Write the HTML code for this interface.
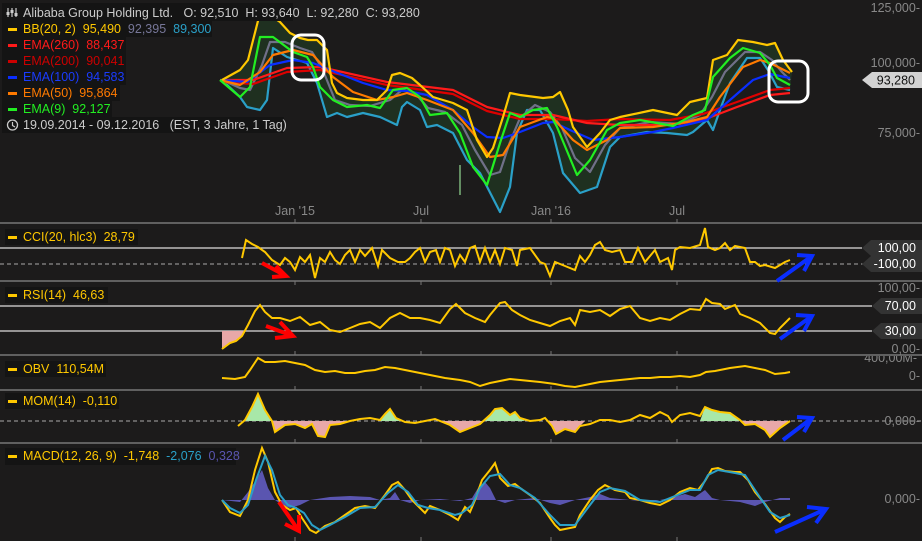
<!DOCTYPE html>
<html><head><meta charset="utf-8"><style>
html,body{margin:0;padding:0;background:#1c1b1b;width:922px;height:541px;overflow:hidden}
svg{display:block}
text{font-family:"Liberation Sans",sans-serif;font-size:12.5px;white-space:pre}
</style></head><body>
<svg width="922" height="541" viewBox="0 0 922 541" xmlns="http://www.w3.org/2000/svg" xml:space="preserve">
<rect width="922" height="541" fill="#1c1b1b"/>
<g stroke="#777" stroke-width="1.5">
<line x1="0" y1="223" x2="922" y2="223"/><line x1="0" y1="281" x2="922" y2="281"/>
<line x1="0" y1="355" x2="922" y2="355"/><line x1="0" y1="390" x2="922" y2="390"/>
<line x1="0" y1="443" x2="922" y2="443"/>
</g>
<g stroke="#777" stroke-width="1">
<line x1="295" y1="219" x2="295" y2="223"/><line x1="421" y1="219" x2="421" y2="223"/><line x1="551" y1="219" x2="551" y2="223"/><line x1="677" y1="219" x2="677" y2="223"/>
<line x1="295" y1="281" x2="295" y2="285"/><line x1="421" y1="281" x2="421" y2="285"/><line x1="551" y1="281" x2="551" y2="285"/><line x1="677" y1="281" x2="677" y2="285"/>
<line x1="295" y1="351" x2="295" y2="355"/><line x1="421" y1="351" x2="421" y2="355"/><line x1="551" y1="351" x2="551" y2="355"/><line x1="677" y1="351" x2="677" y2="355"/>
<line x1="295" y1="386" x2="295" y2="390"/><line x1="421" y1="386" x2="421" y2="390"/><line x1="551" y1="386" x2="551" y2="390"/><line x1="677" y1="386" x2="677" y2="390"/>
<line x1="295" y1="439" x2="295" y2="443"/><line x1="421" y1="439" x2="421" y2="443"/><line x1="551" y1="439" x2="551" y2="443"/><line x1="677" y1="439" x2="677" y2="443"/>
<line x1="295" y1="537" x2="295" y2="541"/><line x1="421" y1="537" x2="421" y2="541"/><line x1="551" y1="537" x2="551" y2="541"/><line x1="677" y1="537" x2="677" y2="541"/>
</g>
<polygon fill="#1f3020" points="222,80 240,70 248,60 260,13 270,15 280,22 290,33 300,38 308,40 317,40 327,50 332,83 337,93 347,98 363,100 377,100 387,90 392,75 400,73 412,78 420,85 433,97 453,103 467,110 477,140 487,157 493,148 503,117 510,93 520,95 543,98 553,97 560,92 568,110 573,127 587,147 600,133 610,120 620,117 653,110 677,115 690,102 707,98 713,60 727,55 738,40 753,42 767,45 775,43 783,60 792,72 790,90 777,87 768,70 760,58 747,58 730,83 720,110 713,130 707,120 693,132 687,135 667,133 647,132 620,137 610,147 597,187 580,193 563,173 553,133 540,110 527,110 517,133 510,187 500,212 480,173 467,160 453,133 437,125 427,127 420,110 407,102 402,107 397,125 380,117 363,113 347,117 337,113 327,117 317,83 307,63 287,57 273,48 267,100 260,110 247,107 240,97"/>
<g fill="none" stroke-width="2.2" stroke-linejoin="round">
<polyline stroke="#2aa0c8" points="222,80 240,97 247,107 260,110 267,100 273,48 287,57 307,63 317,83 327,117 337,113 347,117 363,113 380,117 397,125 402,107 407,102 420,110 427,127 437,125 453,133 467,160 480,173 500,212 510,187 517,133 527,110 540,110 553,133 563,173 580,193 597,187 610,147 620,137 647,132 667,133 687,135 693,132 707,120 713,130 720,110 730,83 747,58 760,58 768,70 777,87 790,90"/>
<polyline stroke="#707088" points="222,80 240,88 250,90 262,65 270,42 285,42 300,48 312,52 322,68 335,100 350,105 370,106 390,100 402,90 415,93 428,108 445,112 462,125 475,150 490,175 500,172 510,142 520,118 535,105 550,112 562,128 575,158 590,172 605,145 620,128 650,122 680,124 700,115 712,97 725,72 745,52 760,52 772,60 782,72 790,80"/>
<polyline stroke="#dd0000" points="222,82 253,84 287,72 320,70 387,85 453,94 487,111 520,119 553,119 587,121 620,119 670,120 703,114 737,102 770,90 790,88"/>
<polyline stroke="#ff1a1a" points="222,80 253,80 287,68 320,67 387,82 453,90 487,107 520,115 553,115 587,123 620,125 670,125 703,120 737,107 770,95 790,93"/>
<polyline stroke="#0a2eff" points="220,80 247,82 270,65 293,60 313,63 330,70 363,83 387,90 407,91 427,95 453,110 473,127 487,137 503,138 520,132 543,123 553,122 570,130 593,140 620,137 653,132 673,128 707,120 730,100 753,80 770,74 790,78"/>
<polyline stroke="#ff7a00" points="220,80 240,85 260,72 273,55 293,50 313,55 333,77 353,92 377,100 393,97 407,93 427,100 453,110 473,133 490,157 503,155 520,127 547,117 553,118 573,140 587,150 607,140 620,128 653,127 687,122 707,117 720,97 743,67 760,60 770,63 790,73"/>
<polyline stroke="#ffc800" points="222,80 240,70 248,60 260,13 270,15 280,22 290,33 300,38 308,40 317,40 327,50 332,83 337,93 347,98 363,100 377,100 387,90 392,75 400,73 412,78 420,85 433,97 453,103 467,110 477,140 487,157 493,148 503,117 510,93 520,95 543,98 553,97 560,92 568,110 573,127 587,147 600,133 610,120 620,117 653,110 677,115 690,102 707,98 713,60 727,55 738,40 753,42 767,45 775,43 783,60 792,72"/>
<polyline stroke="#22ee22" points="220,80 240,97 250,87 260,37 273,37 293,52 307,57 313,67 320,87 333,100 347,107 367,105 380,108 393,90 407,88 420,97 430,115 447,113 460,133 473,167 487,185 500,143 510,113 520,117 533,110 547,108 557,127 577,175 590,160 607,130 620,123 640,120 673,126 693,115 705,110 713,77 730,58 743,48 760,53 770,65 777,78 790,85"/>
</g>
<line x1="460" y1="165" x2="460" y2="195" stroke="#aaffaa" stroke-width="1"/>
<rect x="292" y="35" width="32" height="45" rx="9" fill="none" stroke="#fff" stroke-width="3"/>
<rect x="769" y="61" width="39" height="41" rx="9" fill="none" stroke="#fff" stroke-width="3"/>
<g fill="#888" text-anchor="end">
<text x="920" y="12">125,000-</text><text x="920" y="67">100,000-</text><text x="920" y="137">75,000-</text>
</g>
<polygon points="862,80 872,72 922,72 922,88 872,88" fill="#d2d2d2"/>
<text x="915" y="84.5" text-anchor="end" fill="#111">93,280</text>
<g fill="#888" text-anchor="middle">
<text x="295" y="215">Jan '15</text><text x="421" y="215">Jul</text><text x="551" y="215">Jan '16</text><text x="677" y="215">Jul</text>
</g>
<rect x="2" y="3" width="291" height="18" fill="#141414"/>
<rect x="2" y="21" width="210" height="16" fill="#141414"/>
<rect x="2" y="37" width="124" height="16" fill="#141414"/>
<rect x="2" y="53" width="124" height="16" fill="#141414"/>
<rect x="2" y="69" width="124" height="16" fill="#141414"/>
<rect x="2" y="85" width="118" height="16" fill="#141414"/>
<rect x="2" y="101" width="110" height="16" fill="#141414"/>
<rect x="2" y="117" width="282" height="16" fill="#141414"/>
<g stroke="#ccc" stroke-width="1.2"><line x1="8" y1="8" x2="8" y2="17"/><line x1="12" y1="8" x2="12" y2="17"/><line x1="16" y1="8" x2="16" y2="17"/></g>
<g fill="#ccc"><rect x="6.5" y="12" width="3" height="3"/><rect x="10.5" y="10" width="3" height="3"/><rect x="14.5" y="13" width="3" height="3"/></g>
<text x="23" y="17" fill="#ccc">Alibaba Group Holding Ltd.   O: 92,510  H: 93,640  L: 92,280  C: 93,280</text>
<rect x="8" y="28" width="9" height="3" fill="#ffc800"/><text x="23" y="33"><tspan fill="#ffc800">BB(20, 2)  95,490 </tspan><tspan fill="#777799"> 92,395 </tspan><tspan fill="#2aa0c8"> 89,300</tspan></text>
<rect x="8" y="44" width="9" height="3" fill="#ff1a1a"/><text x="23" y="49" fill="#ff1a1a">EMA(260)  88,437</text>
<rect x="8" y="60" width="9" height="3" fill="#c00"/><text x="23" y="65" fill="#c00">EMA(200)  90,041</text>
<rect x="8" y="76" width="9" height="3" fill="#0a2eff"/><text x="23" y="81" fill="#1a3cff">EMA(100)  94,583</text>
<rect x="8" y="92" width="9" height="3" fill="#ff7a00"/><text x="23" y="97" fill="#ff7a00">EMA(50)  95,864</text>
<rect x="8" y="108" width="9" height="3" fill="#22ee22"/><text x="23" y="113" fill="#22ee22">EMA(9)  92,127</text>
<circle cx="12.5" cy="125" r="5" fill="none" stroke="#ccc" stroke-width="1.3"/><path d="M12.5 122v3.5l2.5 1.5" stroke="#ccc" fill="none" stroke-width="1.2"/>
<text x="23" y="129" fill="#ccc">19.09.2014 - 09.12.2016   (EST, 3 Jahre, 1 Tag)</text>

<line x1="0" y1="248" x2="862" y2="248" stroke="#ddd" stroke-width="1.2"/>
<line x1="0" y1="264" x2="922" y2="264" stroke="#aaa" stroke-width="1" stroke-dasharray="4,3"/>
<rect x="5" y="229" width="133" height="16" fill="#141414"/>
<rect x="8" y="236" width="9" height="3" fill="#ffc800"/><text x="23" y="241" fill="#ffc800">CCI(20, hlc3)  28,79</text>
<polyline fill="none" stroke="#ffc800" stroke-width="2" points="242,258 246,240 252,244 258,247 265,252 272,260 280,265 285,258 290,262 295,270 300,257 305,262 310,255 315,278 320,258 325,262 330,252 335,260 340,264 345,255 350,250 355,262 360,250 365,256 372,248 378,266 382,250 390,258 398,262 405,262 410,258 415,252 420,248 425,262 430,252 436,250 440,262 445,248 450,250 455,266 460,255 465,262 470,248 475,246 480,262 485,248 490,262 495,250 500,264 505,248 512,250 517,266 520,250 530,248 540,262 545,264 550,276 555,262 565,266 575,270 580,256 585,262 590,255 595,245 600,242 605,250 612,252 620,250 625,262 632,262 638,248 645,262 655,250 660,262 668,258 672,270 675,250 680,247 690,248 700,245 705,228 708,247 715,250 720,248 725,243 730,250 735,246 745,248 750,262 755,262 760,266 765,265 775,268 785,262 790,260"/>
<polygon points="862,248 871,240 922,240 922,256 871,256" fill="#333"/><text x="916" y="252" text-anchor="end" fill="#fff">100,00</text>
<polygon points="862,264 871,256 922,256 922,272 871,272" fill="#333"/><text x="916" y="268" text-anchor="end" fill="#fff">-100,00</text>

<line x1="0" y1="306" x2="872" y2="306" stroke="#ddd" stroke-width="1.2"/>
<line x1="0" y1="331" x2="872" y2="331" stroke="#ddd" stroke-width="1.2"/>
<polygon points="222,349 230,343 236,341 242,336 245,331 222,331" fill="#e8a8a8"/>
<rect x="5" y="287" width="103" height="16" fill="#141414"/>
<rect x="8" y="294" width="9" height="3" fill="#ffc800"/><text x="23" y="299" fill="#ffc800">RSI(14)  46,63</text>
<polyline fill="none" stroke="#ffc800" stroke-width="2" points="222,349 230,343 236,341 242,336 248,325 255,311 260,305 265,312 272,318 280,318 290,321 300,317 310,325 320,322 330,330 340,332 350,328 360,324 370,322 380,328 390,318 400,313 410,318 420,318 430,320 440,323 450,309 456,304 465,313 475,318 485,322 490,315 500,303 505,302 512,310 520,315 530,320 540,323 550,326 560,321 570,318 575,325 580,310 590,312 600,310 610,316 620,309 630,306 640,318 650,321 660,318 670,320 680,314 690,309 700,310 706,299 712,303 720,304 725,309 735,305 740,314 750,318 760,323 770,333 775,334 780,328 790,318"/>
<g fill="#888" text-anchor="end"><text x="920" y="292">100,00-</text><text x="920" y="353">0,00-</text></g>
<polygon points="872,306 881,298 922,298 922,314 881,314" fill="#333"/><text x="916" y="310" text-anchor="end" fill="#fff">70,00</text>
<polygon points="872,331 881,323 922,323 922,339 881,339" fill="#333"/><text x="916" y="335" text-anchor="end" fill="#fff">30,00</text>

<rect x="5" y="361" width="101" height="16" fill="#141414"/>
<rect x="8" y="368" width="9" height="3" fill="#ffc800"/><text x="23" y="373" fill="#ffc800">OBV  110,54M</text>
<polyline fill="none" stroke="#ffc800" stroke-width="2" points="222,378 235,379 245,377 250,370 258,358 265,362 275,362 285,361 295,363 305,365 315,370 325,372 335,371 345,373 355,373 365,371 375,370 385,367 395,368 405,370 415,372 430,375 445,378 460,380 470,382 480,386 490,383 500,381 510,379 520,380 540,382 555,384 565,386 575,387 590,384 600,382 610,381 620,380 630,379 640,378 650,378 660,377 670,377 680,376 690,377 700,375 706,372 715,371 730,368 745,366 755,368 765,370 770,372 775,374 785,373 790,372"/>
<svg x="860" y="356" width="62" height="8" overflow="hidden"><text x="57" y="6" text-anchor="end" fill="#888">400,00M-</text></svg>
<text x="920" y="380" text-anchor="end" fill="#888">0-</text>

<line x1="0" y1="421" x2="922" y2="421" stroke="#aaa" stroke-width="1" stroke-dasharray="4,3"/>
<polygon points="245,421 252,407 258,394 265,410 272,421" fill="#a8e8a8"/>
<polygon points="272,421 275,432 285,425 295,424 305,428 312,424 318,436 325,437 330,425 340,424 350,421" fill="#e8a8a8"/>
<polygon points="380,421 385,414 390,409 396,418 400,421" fill="#a8e8a8"/>
<polygon points="440,421 450,425 460,432 470,428 480,424 485,421" fill="#e8a8a8"/>
<polygon points="485,421 490,415 495,409 502,408 510,415 515,412 520,418 525,421" fill="#a8e8a8"/>
<polygon points="548,421 552,426 556,434 565,429 575,432 580,426 585,421" fill="#e8a8a8"/>
<polygon points="700,421 705,407 712,410 720,412 730,413 740,421" fill="#a8e8a8"/>
<polygon points="740,421 745,425 755,424 765,430 770,437 780,428 790,421" fill="#e8a8a8"/>
<rect x="5" y="393" width="114" height="16" fill="#141414"/>
<rect x="8" y="400" width="9" height="3" fill="#ffc800"/><text x="23" y="405" fill="#ffc800">MOM(14)  -0,110</text>
<polyline fill="none" stroke="#ffc800" stroke-width="2" points="238,426 245,420 252,407 258,394 265,410 272,421 275,432 285,425 295,424 305,428 312,424 318,436 325,437 330,425 340,424 350,421 360,419 370,418 380,420 385,414 390,409 396,418 405,422 415,423 425,421 435,419 450,425 460,432 470,428 480,424 490,415 495,409 502,408 510,415 515,412 520,418 530,421 540,420 545,418 552,426 556,434 565,429 575,432 580,426 590,424 600,420 610,420 620,422 630,420 640,415 650,418 660,412 668,416 672,422 680,415 690,413 700,416 705,407 712,410 720,412 730,413 740,420 745,425 755,424 765,430 770,437 780,428 790,421"/>
<text x="920" y="425" text-anchor="end" fill="#888">0,000-</text>

<polygon fill="#5a55b0" points="222,500 240,502 248,492 256,480 262,470 268,488 275,500 282,505 290,508 300,505 310,500 330,497 350,496 370,497 380,500 390,498 395,492 400,500 410,503 420,500 440,499 460,501 472,498 478,488 485,482 490,488 496,500 505,503 515,500 535,498 550,503 560,505 575,500 590,497 600,494 610,498 630,500 650,502 670,498 685,494 695,497 705,490 712,498 720,500 740,502 755,506 765,502 780,498 790,498 790,500 222,500"/>
<rect x="5" y="448" width="231" height="17" fill="#141414"/>
<rect x="8" y="455" width="9" height="3" fill="#ffc800"/><text x="23" y="460"><tspan fill="#ffc800">MACD(12, 26, 9)  -1,748 </tspan><tspan fill="#2aa0c8"> -2,076 </tspan><tspan fill="#5a55b0"> 0,328</tspan></text>
<polyline fill="none" stroke="#ffc800" stroke-width="2" points="222,500 230,512 240,516 248,500 255,470 262,448 268,462 275,492 282,505 290,510 296,508 302,518 310,530 316,533 325,526 335,522 345,515 355,508 365,506 375,508 385,495 392,485 398,482 405,490 412,500 420,508 425,513 430,506 440,510 450,515 458,520 465,507 470,512 475,500 482,480 490,470 495,463 500,478 508,486 515,484 520,488 530,495 540,503 550,518 555,525 560,530 575,527 580,515 590,500 598,490 605,485 615,490 625,492 630,498 640,500 650,503 660,505 670,500 680,492 690,488 698,490 705,481 712,469 718,468 725,471 735,472 740,472 748,480 755,492 765,504 775,518 780,522 785,517 790,514"/>
<polyline fill="none" stroke="#2aa0c8" stroke-width="2" points="222,500 230,508 240,513 248,505 256,480 265,456 272,470 280,495 288,505 296,508 304,513 312,525 320,530 330,525 345,517 360,508 375,507 388,493 398,485 408,492 418,505 428,508 440,510 455,515 462,513 472,505 480,488 490,476 500,474 510,485 520,488 535,498 550,515 560,525 575,525 590,505 600,492 610,488 625,491 640,500 660,502 675,496 690,490 700,490 708,475 718,470 735,473 745,475 755,490 770,512 780,518 790,515"/>
<text x="920" y="503" text-anchor="end" fill="#888">0,000-</text>

<g stroke-width="4" fill="none" stroke-linecap="butt">
<g stroke="#ff0000">
<path d="M262,263 L286,276 M276,266 L286,276 L272,277"/>
<path d="M266,326 L293,336 M280,322 L293,336 L275,338"/>
<path d="M279,502 L299,531 M299,515 L299,531 L285,524"/>
</g>
<g stroke="#0a2eff">
<path d="M777,281 L812,256 M797,255 L812,256 L804,271"/>
<path d="M780,339 L812,316 M796,315 L812,316 L804,331"/>
<path d="M783,440 L812,418 M797,417 L812,418 L804,432"/>
<path d="M775,532 L826,509 M807,507 L826,509 L816,523"/>
</g>
</g>
</svg>
</body></html>
